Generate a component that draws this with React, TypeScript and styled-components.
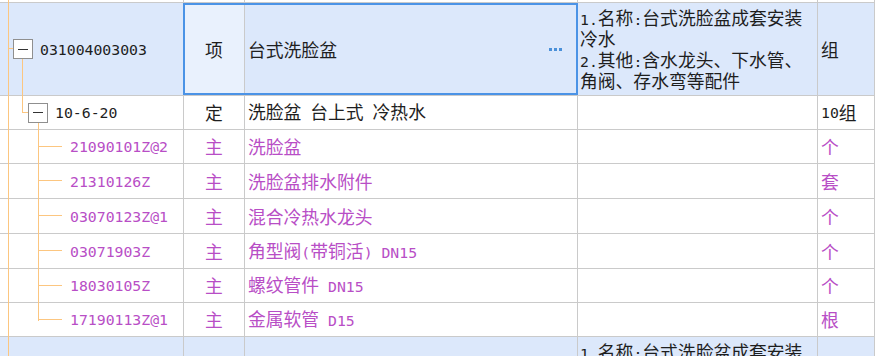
import React from 'react';
import styled, { createGlobalStyle } from 'styled-components';

// -- constants --
const LINE = '#cacaca';
const GUIDE = '#fcc680';
const SEL_BG = '#dce8fb';
const FOCUS_BG = '#e9f1fd';
const OUTLINE = '#4b93e6';
const INK = '#1e1e1e';
const PURPLE = '#b84ec6';

type Kind = 'stub' | 'group' | 'quota' | 'item';

interface RowData {
  kind: Kind;
  h: number;
  code?: string;
  type?: string;
  name?: string;
  desc?: string[];
  unit?: string;
  selected?: boolean;
  focused?: boolean;
  last?: boolean;
}

const desc_lines = ['1.名称:台式洗脸盆成套安装', '冷水', '2.其他:含水龙头、下水管、', '角阀、存水弯等配件'];

const rows: RowData[] = [
  { kind: 'stub', h: 3 },
  {
    kind: 'group',
    h: 93,
    code: '031004003003',
    type: '项',
    name: '台式洗脸盆',
    desc: desc_lines,
    unit: '组',
    selected: true,
    focused: true,
  },
  { kind: 'quota', h: 34, code: '10-6-20', type: '定', name: '洗脸盆 台上式 冷热水', unit: '10组' },
  { kind: 'item', h: 34, code: '21090101Z@2', type: '主', name: '洗脸盆', unit: '个' },
  { kind: 'item', h: 35, code: '21310126Z', type: '主', name: '洗脸盆排水附件', unit: '套' },
  { kind: 'item', h: 35, code: '03070123Z@1', type: '主', name: '混合冷热水龙头', unit: '个' },
  { kind: 'item', h: 35, code: '03071903Z', type: '主', name: '角型阀(带铜活) DN15', unit: '个' },
  { kind: 'item', h: 34, code: '18030105Z', type: '主', name: '螺纹管件 DN15', unit: '个' },
  { kind: 'item', h: 34, code: '17190113Z@1', type: '主', name: '金属软管 D15', unit: '根', last: true },
  { kind: 'group', h: 93, desc: desc_lines, selected: true },
];

// ascii parts are drawn half width, like the original grid font
const mixText = (text: string) =>
  text.split(/([\x20-\x7e]+)/).map((part, i) =>
    /^[\x20-\x7e]+$/.test(part) ? <Latin key={i}>{part}</Latin> : <React.Fragment key={i}>{part}</React.Fragment>
  );

// -- tree part --
const TreeGuides: React.FC<{ kind: Kind; last?: boolean }> = ({ kind, last }) => (
  <>
    <VGuide $left={8} $top="0px" $bottom="-1px" />
    {kind === 'group' && (
      <>
        <HGuide $left={8} $width={5} />
        <VGuide $left={22} $top="calc(50% + 10px)" $bottom="-1px" />
      </>
    )}
    {kind === 'quota' && (
      <>
        <VGuide $left={22} $top="0px" $bottom="50%" />
        <HGuide $left={22} $width={6} />
        <VGuide $left={38} $top="calc(50% + 10px)" $bottom="-1px" />
      </>
    )}
    {kind === 'item' && (
      <>
        <VGuide $left={38} $top="0px" $bottom={last ? 'calc(50% - 1px)' : '-1px'} />
        <HGuide $left={38} $width={24} />
      </>
    )}
  </>
);

const indentOf = (kind: Kind) => (kind === 'group' ? 13 : kind === 'quota' ? 28 : 70);

// -- main component --
const App: React.FC = () => {
  return (
    <>
      <GlobalStyle />
      <Grid>
        {rows.map((r, i) => {
          const color = r.kind === 'item' ? PURPLE : INK;
          return (
            <Row key={i} $h={r.h} $selected={!!r.selected}>
              <TreeCell $indent={indentOf(r.kind)} $color={color}>
                <TreeGuides kind={r.kind} last={r.last} />
                {(r.kind === 'group' || r.kind === 'quota') && (
                  <ExpandBox>
                    <Minus />
                  </ExpandBox>
                )}
                {r.code && <CodeText>{r.code}</CodeText>}
              </TreeCell>
              <TypeCell $color={color} $focused={!!r.focused}>
                {r.type}
              </TypeCell>
              <NameCell $color={color}>
                <span>{r.name && mixText(r.name)}</span>
                {r.focused && (
                  <MoreDots>
                    <Dot />
                    <Dot />
                    <Dot />
                  </MoreDots>
                )}
              </NameCell>
              <DescCell $color={color}>
                {r.desc && r.desc.map((l, j) => <DescLine key={j}>{mixText(l)}</DescLine>)}
              </DescCell>
              <UnitCell $color={color}>{r.unit && mixText(r.unit)}</UnitCell>
              {r.focused && <Selection />}
            </Row>
          );
        })}
      </Grid>
    </>
  );
};

// -- styled components --

const GlobalStyle = createGlobalStyle`
  html, body {
    margin: 0;
    padding: 0;
    background: #fff;
    overflow: hidden;
  }
  body {
    font-family: "Noto Sans CJK SC", "Noto Sans", sans-serif;
  }
`;

const Grid = styled.div`
  width: 875px;
  height: 356px;
  overflow: hidden;
  display: flex;
  flex-direction: column;
  background: #fff;
`;

const Row = styled.div<{ $h: number; $selected: boolean }>`
  position: relative;
  flex-shrink: 0;
  height: ${(p) => p.$h}px;
  display: grid;
  grid-template-columns: 184px 61px 333px 240px 1fr;
  background: ${(p) => (p.$selected ? SEL_BG : '#fff')};
`;

const Cell = styled.div<{ $color: string }>`
  display: flex;
  align-items: center;
  min-width: 0;
  border-right: 1px solid ${LINE};
  border-bottom: 1px solid ${LINE};
  color: ${(p) => p.$color};
  font-size: 17.8px;
  line-height: 21px;
  white-space: nowrap;
`;

const TreeCell = styled(Cell)<{ $indent: number }>`
  position: relative;
  padding-left: ${(p) => p.$indent}px;
`;

const TypeCell = styled(Cell)<{ $focused: boolean }>`
  justify-content: center;
  background: ${(p) => (p.$focused ? FOCUS_BG : 'transparent')};
`;

const NameCell = styled(Cell)`
  justify-content: space-between;
  padding: 0 15px 0 3px;
  overflow: hidden;
`;

const DescCell = styled(Cell)`
  flex-direction: column;
  justify-content: center;
  align-items: flex-start;
  padding-left: 2px;
  overflow: hidden;
`;

const DescLine = styled.div`
  height: 21px;
`;

const UnitCell = styled(Cell)`
  padding-left: 3px;
  overflow: hidden;
`;

const Latin = styled.span`
  font-family: "DejaVu Sans Mono", "Liberation Mono", monospace;
  font-size: 14.8px;
`;

const CodeText = styled.span`
  font-family: "DejaVu Sans Mono", "Liberation Mono", monospace;
  font-size: 14.8px;
`;

const ExpandBox = styled.span`
  position: relative;
  z-index: 1;
  box-sizing: border-box;
  width: 20px;
  height: 20px;
  margin-right: 7px;
  border: 1px solid #8f8f8f;
  background: #fff;
  display: flex;
  align-items: center;
  justify-content: center;
  flex-shrink: 0;
`;

const Minus = styled.span`
  width: 10px;
  height: 1px;
  background: #333;
`;

const VGuide = styled.span<{ $left: number; $top: string; $bottom: string }>`
  position: absolute;
  left: ${(p) => p.$left}px;
  top: ${(p) => p.$top};
  bottom: ${(p) => p.$bottom};
  width: 1px;
  background: ${GUIDE};
`;

const HGuide = styled.span<{ $left: number; $width: number }>`
  position: absolute;
  left: ${(p) => p.$left}px;
  top: calc(50% - 1px);
  width: ${(p) => p.$width}px;
  height: 1px;
  background: ${GUIDE};
`;

const MoreDots = styled.span`
  display: flex;
  gap: 2px;
  margin-top: 1px;
`;

const Dot = styled.span`
  width: 3px;
  height: 3px;
  background: #4a90d9;
`;

const Selection = styled.div`
  position: absolute;
  left: 183px;
  top: 0;
  width: 395px;
  height: calc(100% - 1px);
  box-sizing: border-box;
  border: 2px solid ${OUTLINE};
  pointer-events: none;
`;

// -- finally export part --

export default App;
